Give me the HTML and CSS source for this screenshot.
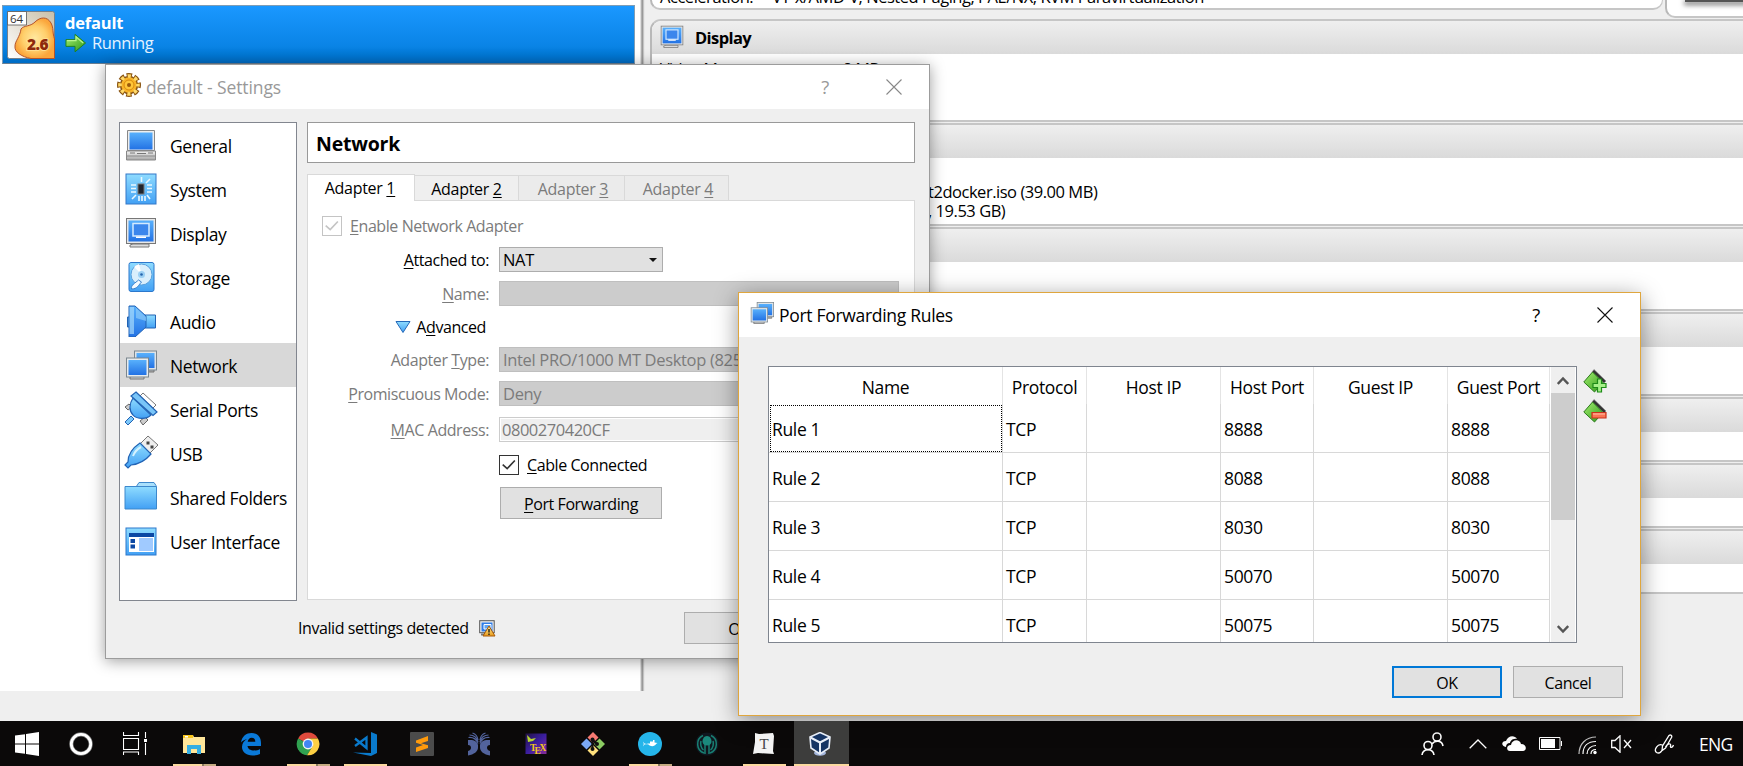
FILE: index.html
```html
<!DOCTYPE html>
<html lang="en">
<head>
<meta charset="utf-8">
<title>VirtualBox</title>
<link rel="stylesheet" href="styles.css">
</head>
<body>
<svg class="defs" width="0" height="0">
  <defs>
    <linearGradient id="blue" x1="0" y1="0" x2="0" y2="1"><stop offset="0" stop-color="#58b0fc"/><stop offset="1" stop-color="#2372e4"/></linearGradient>
    <linearGradient id="sky" x1="0" y1="0" x2="0" y2="1"><stop offset="0" stop-color="#8fdcff"/><stop offset="1" stop-color="#42a0f4"/></linearGradient>
    <linearGradient id="metal" x1="0" y1="0" x2="0" y2="1"><stop offset="0" stop-color="#f4f4f4"/><stop offset="1" stop-color="#a6a6a6"/></linearGradient>
    <linearGradient id="gold" x1="0" y1="0" x2="0" y2="1"><stop offset="0" stop-color="#fff0a0"/><stop offset="1" stop-color="#e89a18"/></linearGradient>
    <linearGradient id="green" x1="0" y1="0" x2="1" y2="1"><stop offset="0" stop-color="#a4ee70"/><stop offset="1" stop-color="#2c9818"/></linearGradient>
    <symbol id="i-display" viewBox="0 0 32 32">
      <path d="M8 27h16v3H5v-2z" fill="#ddd" stroke="#777"/>
      <rect x="1.5" y="1.5" width="29" height="25" fill="#e8e8e8" stroke="#777"/>
      <rect x="3.500" y="3.500" width="25" height="21" fill="url(#blue)"/>
      <rect x="8" y="6.500" width="16" height="12.500" fill="#3b86ec" stroke="#d4eaff" stroke-width="1.500"/>
      <path d="M11 19.500h10v1.500H11z" fill="#fff"/>
    </symbol>
    <symbol id="i-network" viewBox="0 0 32 32">
      <path d="M19 20h10v3H19z" fill="#aaa" stroke="#777"/>
      <rect x="9.500" y="2" width="22" height="19" fill="#dfe4e8" stroke="#7b868e"/>
      <rect x="11.500" y="4" width="18" height="15" fill="url(#blue)"/>
      <path d="M8 27h11v3H5v-2z" fill="#ccc" stroke="#777"/>
      <rect x="1.500" y="9" width="22" height="19" fill="#e8ecee" stroke="#7b868e"/>
      <rect x="3.500" y="11" width="18" height="15" fill="url(#blue)"/>
    </symbol>
  </defs>
</svg>

<div class="screen">
  <main class="manager">
    <section class="machines">
      <div class="machine">
        <svg class="machine-icon" viewBox="0 0 48 48">
          <defs><linearGradient id="tan" x1="0" y1="1" x2="1" y2="0"><stop offset="0" stop-color="#fff"/><stop offset="1" stop-color="#c9bfa8"/></linearGradient>
          <radialGradient id="blob"><stop offset="0" stop-color="#ffe9a0"/><stop offset=".6" stop-color="#ffcf6c"/><stop offset="1" stop-color="#fba63c"/></radialGradient></defs>
          <rect x=".5" y=".5" width="47" height="47" rx="2" fill="url(#tan)" stroke="#76808a"/>
          <path d="M47.500 47.500H24C15 46 7 41 8 35c0-5 5-9 6-17 3-4 9-2 14-7s12-6 16 1c3 6 1 8 3.500 16z" fill="url(#blob)" stroke="#b4532a"/>
          <path d="M.5.5h19v13.500H.5z" fill="#fff" stroke="#555" stroke-width=".8"/>
          <text x="3" y="11.500" class="t64">64</text>
          <text x="20" y="39" class="t26">2.6</text>
        </svg>
        <div class="machine-info">
          <div class="machine-name">default</div>
          <div class="machine-state">
            <svg width="22" height="20" viewBox="0 0 23 20"><path d="M1 6.500h9.500V1L21.500 10 10.500 19.200V13.500H1z" fill="url(#green)" stroke="#1e8018"/><path d="M2 7.500h9.500V3.500L19 10" fill="none" stroke="#b8f58e" stroke-width="1.300"/></svg>
            <span>Running</span>
          </div>
        </div>
      </div>
    </section>
    <div class="splitter"></div>
    <section class="details">
      <div class="top-row">
        <div class="panel system"><span class="key">Acceleration:</span><span>VT-x/AMD-V, Nested Paging, PAE/NX, KVM Paravirtualization</span></div>
        <div class="panel preview"><div class="preview-screen"></div></div>
      </div>
      <div class="panel p-tall"><header><svg width="24" height="24"><use href="#i-display"/></svg>Display</header>
        <div class="kv"><span class="key wide">Video Memory:</span><span>8 MB</span></div></div>
      <div class="panel p-tall"><header></header><div class="iso">t2docker.iso (39.00 MB)<br>, 19.53 GB)</div></div>
      <div class="panel p-mid"><header></header></div>
      <div class="panel p-mid"><header></header></div>
      <div class="panel p-low"><header></header></div>
      <div class="panel p-low"><header></header></div>
      <div class="panel p-low"><header></header></div>
    </section>
  </main>

  <section class="window settings">
    <div class="titlebar">
      <svg class="title-icon" viewBox="0 0 24 24"><g fill="none"><circle cx="12" cy="12" r="9.500" stroke="#8a5410" stroke-width="5" stroke-dasharray="5.200 2.261" stroke-dashoffset="2.600"/><circle cx="12" cy="12" r="8.500" fill="#f9b428" stroke="#8a5410" stroke-width="1.500"/><circle cx="12" cy="12" r="9" stroke="#ffd968" stroke-width="3.600" stroke-dasharray="3.200 3.869" stroke-dashoffset="1.600"/></g><circle cx="12" cy="12" r="5" fill="#ffc63a" stroke="#d8890e"/><circle cx="12" cy="12" r="2" fill="#9a5a0c"/></svg>
      <span>default - Settings</span>
      <span class="help">?</span>
      <svg class="close" viewBox="0 0 16 16"><path d="M.5.5l15 15M15.500.5l-15 15"/></svg>
    </div>
    <div class="settings-body">
      <nav class="categories">
        <div class="cat"><svg viewBox="0 0 32 32"><path d="M2.500 1.500h27v20h-27z" fill="#eee" stroke="#888"/><path d="M4.500 3.500h23v17h-23z" fill="url(#blue)"/><path d="M1.500 22h29v9h-29z" fill="url(#metal)" stroke="#888"/><path d="M2 27h28" stroke="#888"/><path d="M5 24h5M12 24.500h9M23 24h5" stroke="#777"/></svg>General</div>
        <div class="cat"><svg viewBox="0 0 32 32"><rect x="1" y="1" width="30" height="30" fill="url(#sky)" stroke="#3478c8"/><rect x="13" y="11" width="6" height="10" fill="#20242c" stroke="#777"/><path d="M16.500 4v5M25 6l-4 4M6 12h5M6 15.500h5M6 19h5M22 12h5M22 15.500h5M22 19h5M7 26l4-4M14 23v5M17 23v5M20 23v5M22 22l3 4" stroke="#e8f8ff" stroke-width="1.600"/></svg>System</div>
        <div class="cat"><svg><use href="#i-display"/></svg>Display</div>
        <div class="cat"><svg viewBox="0 0 32 32"><rect x="4" y="1.500" width="25" height="29" rx="2" fill="url(#sky)" stroke="#2c78cc"/><circle cx="16.500" cy="13.500" r="10.500" fill="#d9effc" stroke="#5aa0dc"/><path d="M16.500 13L9 6a11 11 0 0 1 5-3z" fill="#fff"/><circle cx="16.500" cy="13.500" r="3.500" fill="#9bd0f4"/><circle cx="16.500" cy="13.500" r="1.300" fill="#2464ac"/><path d="M6.500 28c-1-4 4-6 7-9l3 2c-3 3-4 7-10 7z" fill="#f4fbff" stroke="#3b82cc"/></svg>Storage</div>
        <div class="cat"><svg viewBox="0 0 32 32"><path d="M2.500 12h3v10h-3z" fill="#5aa8ee" stroke="#2263b4"/><path d="M20 10h10.500v13H20z" fill="url(#sky)" stroke="#2263b4"/><path d="M4 1h6l11 10v11L10 32H4z" fill="url(#blue)" stroke="#2263b4"/><path d="M4.500 2H9v27H4.500z" fill="#a5d8fb" opacity=".7"/><path d="M11 3l10 9v4l-10-3z" fill="#8ccafa" opacity=".7"/></svg>Audio</div>
        <div class="cat active"><svg><use href="#i-network"/></svg>Network</div>
        <div class="cat"><svg class="big" viewBox="0 0 34 34"><path d="M19 2l13 12-3 3L16 5z" fill="#fff" stroke="#777"/><path d="M1 16l4-3 3 3-4 3zM16 30l5-4 3 3-5 5z" fill="#ccc" stroke="#666"/><path d="M1 31l6-6 3 3-6 6z" fill="#7cc8fa" stroke="#2263b4"/><path d="M9 7l18 17c-5 5-15 4-18 0-4-4-4-11 0-17z" fill="url(#sky)" stroke="#2263b4" stroke-width="1.200"/><path d="M12 1L33 21l-4 3.500L7 5z" fill="#79c5f8" stroke="#2263b4" stroke-width="1.200"/></svg>Serial Ports</div>
        <div class="cat"><svg class="big" viewBox="0 0 34 34"><path d="M24 1l10 9-8 8-10-9z" fill="#eee" stroke="#777"/><path d="M22.500 6.500h3v3h-3zM26.500 10.500h3v3h-3z" fill="#444"/><path d="M16 8l11 11c-5 6-11 10-20 11l-3 3-3-3 3-3C4 18 10 12 16 8z" fill="url(#sky)" stroke="#2263b4" stroke-width="1.200"/><path d="M9 21c2-5 4-7 8-9" stroke="#d5f2ff" stroke-width="2" fill="none"/></svg>USB</div>
        <div class="cat"><svg class="big" viewBox="0 0 34 34"><path d="M12 8l3-4.500h15l2 3V10H12z" fill="#a9e0fc" stroke="#3d88cc"/><path d="M1 7.500h31.500V30H1z" fill="url(#sky)" stroke="#3d88cc"/></svg>Shared Folders</div>
        <div class="cat"><svg viewBox="0 0 32 32"><rect x="1" y="3" width="30" height="27" fill="url(#sky)" stroke="#2c78cc"/><path d="M4 8h25v4H4z" fill="#0b48a4"/><path d="M4 12h25v15H4z" fill="#fff"/><path d="M14 13h14v13H14z" fill="#a0caff"/><path d="M5.500 14h4.500v4H5.500zM5.500 19.500h4.500v4H5.500z" fill="#0b48a4"/></svg>User Interface</div>
      </nav>
      <div class="page">
        <h1>Network</h1>
        <div class="tabs">
          <div class="tab on">Adapter <u>1</u></div>
          <div class="tab t2">Adapter <u>2</u></div>
          <div class="tab t3 off">Adapter <u>3</u></div>
          <div class="tab t4 off">Adapter <u>4</u></div>
        </div>
        <div class="pane">
          <div class="row enable off"><span class="check"><svg viewBox="0 0 20 20"><path d="M3 9.500l5 4.500L16.500 5"/></svg></span><span><u>E</u>nable Network Adapter</span></div>
          <div class="row attached"><label><u>A</u>ttached to:</label><div class="combo live">NAT<i></i></div></div>
          <div class="row name off"><label><u>N</u>ame:</label><div class="combo"><i></i></div></div>
          <div class="row advanced"><label><svg width="16" height="14" viewBox="0 0 16 14"><path d="M1 1.500h14L8 12.500z" fill="url(#sky)" stroke="#2468b8"/></svg>A<u>d</u>vanced</label></div>
          <div class="row type off"><label>Adapter <u>T</u>ype:</label><div class="combo">Intel PRO/1000 MT Desktop (82540EM)<i></i></div></div>
          <div class="row mode off"><label><u>P</u>romiscuous Mode:</label><div class="combo">Deny<i></i></div></div>
          <div class="row mac off"><label><u>M</u>AC Address:</label><div class="field">0800270420CF</div></div>
          <div class="row cable"><label></label><span class="check"><svg viewBox="0 0 20 20"><path d="M3 9.500l5 4.500L16.500 5"/></svg></span><span class="cable-text"><u>C</u>able Connected</span></div>
          <div class="row fwd"><label></label><button class="btn"><span><u>P</u>ort Forwarding</span></button></div>
        </div>
      </div>
    </div>
    <footer class="settings-foot">
      <span class="msg">Invalid settings detected</span>
      <svg width="17" height="17" viewBox="0 0 17 17"><rect x=".7" y=".7" width="14.500" height="12" fill="#eee" stroke="#555"/><path d="M2.500 2.500h11v9h-11z" fill="#2f7de8"/><path d="M5 4.500h7v4.500H5z" fill="#5fa4f4" stroke="#fff"/><path d="M2 13.500h5v2H2z" fill="#777"/><path d="M10 6l6 10H4z" fill="url(#gold)" stroke="#a85a08"/><path d="M10 9v3.500M10 13.500v1.500" stroke="#111" stroke-width="1.300"/></svg>
      <button class="btn">OK</button>
    </footer>
  </section>

  <section class="window rules">
    <div class="titlebar">
      <svg class="title-icon" viewBox="0 0 32 32"><use href="#i-network"/></svg>
      <span>Port Forwarding Rules</span>
      <span class="help">?</span>
      <svg class="close" viewBox="0 0 16 16"><path d="M.5.5l15 15M15.500.5l-15 15"/></svg>
    </div>
    <div class="rules-body">
      <div class="table-box">
        <div class="grid">
          <div class="th">Name</div><div class="th">Protocol</div><div class="th">Host IP</div><div class="th">Host Port</div><div class="th">Guest IP</div><div class="th">Guest Port</div>
          <div class="td focus">Rule 1</div><div class="td">TCP</div><div class="td"></div><div class="td">8888</div><div class="td"></div><div class="td">8888</div>
          <div class="td">Rule 2</div><div class="td">TCP</div><div class="td"></div><div class="td">8088</div><div class="td"></div><div class="td">8088</div>
          <div class="td">Rule 3</div><div class="td">TCP</div><div class="td"></div><div class="td">8030</div><div class="td"></div><div class="td">8030</div>
          <div class="td">Rule 4</div><div class="td">TCP</div><div class="td"></div><div class="td">50070</div><div class="td"></div><div class="td">50070</div>
          <div class="td">Rule 5</div><div class="td">TCP</div><div class="td"></div><div class="td">50075</div><div class="td"></div><div class="td">50075</div>
        </div>
        <div class="scroll">
          <svg width="12" height="9" viewBox="0 0 12 9"><path d="M.8 8L6 2.500 11.200 8"/></svg>
          <div class="thumb"></div>
          <svg class="down" width="12" height="9" viewBox="0 0 12 9"><path d="M.8 1L6 6.500 11.200 1"/></svg>
        </div>
      </div>
      <div class="tools">
        <svg viewBox="0 0 24 24"><path d="M11 .5L23 12l-2 2L9 3z" fill="#333" stroke="#888" stroke-width=".6"/><path d="M9.500 3L20 13.500 11.500 23 .8 13z" fill="url(#green)" stroke="#2b7a1c"/><path d="M14.500 10h4v4.500H23v4h-4.500V23h-4v-4.500H10v-4h4.500z" fill="#a6f088" stroke="#1d8a18" stroke-width="1.200"/></svg>
        <svg viewBox="0 0 24 24"><path d="M11 .5L23 12l-2 2L9 3z" fill="#333" stroke="#888" stroke-width=".6"/><path d="M9.500 3L20 13.500 11.500 23 .8 13z" fill="url(#green)" stroke="#2b7a1c"/><path d="M9 13.500h14v5.500H9z" fill="#fb7454" stroke="#c8321c" stroke-width="1.200"/><path d="M10 15h12" stroke="#ffc0a8"/></svg>
      </div>
    </div>
    <footer class="rules-foot"><button class="btn default">OK</button><button class="btn">Cancel</button></footer>
  </section>

  <footer class="taskbar">
    <div class="sys"><svg viewBox="0 0 24 24"><path d="M0 3.500l10-1.300v9.300H0zM11 2l13-2v11.500H11zM0 12.500h10v9.300L0 20.500zM11 12.500h13V24l-13-2z" fill="#fff"/></svg></div>
    <div class="sys"><svg viewBox="0 0 24 24"><circle cx="12" cy="12" r="9.700" fill="none" stroke="#777" stroke-width="4.200"/><circle cx="12" cy="12" r="9.700" fill="none" stroke="#fff" stroke-width="2.800"/></svg></div>
    <div class="sys"><svg viewBox="0 0 24 24"><path d="M.5 0v3.500h15V0M.5 6.500h15v11H.5zM.5 23v-3h15v3M22.500 0v6M22.500 11v12" fill="none" stroke="#fff" stroke-width="1.100"/><path d="M21 7h3v3h-3z" fill="#fff"/></svg></div>
    <div class="apps">
      <div class="app multi"><svg viewBox="0 0 24 24"><path d="M1 5l1-2h9l1 2h11v16H1z" fill="#ffe69a"/><path d="M1 3h10v3H1z" fill="#f8c61c"/><path d="M3 4h3v1.500H3z" fill="#fff"/><path d="M5 22v-9h14v9h-4v-5H9v5z" fill="#34aee4"/></svg></div>
      <div class="app"><svg viewBox="0 0 24 24"><path d="M2 10.500C3 4 7.500 1 12.500 1 19 1 22 5.500 22 11v3H8.500c.3 3 3 4.500 6.500 4.500 2.500 0 4.500-.7 6-1.600v5c-2 1-4.500 1.600-7.500 1.600C7 23.500 3 19.800 3 15c0-3.500 2-6.300 5-8-3 .8-4.800 2-6 3.500zM8.700 9.700h7.600c0-2.500-1.300-4-3.600-4s-3.700 1.700-4 4z" fill="#0a79d8"/></svg></div>
      <div class="app multi"><svg viewBox="0 0 24 24"><path d="M12 12L2.100 6.500A11.200 11.200 0 0 1 21.900 6.500H12z" fill="#df4a3c"/><path d="M2.100 6.500A11.200 11.200 0 0 0 11 23.200l5.500-8.500L12 12z" fill="#30a150"/><path d="M21.900 6.500A11.200 11.200 0 0 1 11 23.200L16.500 14.500 12 6.500z" fill="#fdd043"/><circle cx="12" cy="12" r="5.400" fill="#f4f4f4"/><circle cx="12" cy="12" r="4" fill="#4286f3"/></svg></div>
      <div class="app run"><svg viewBox="0 0 24 24"><path d="M18 0l6 2.500V21l-6 3L0 20.500l18 .5z" fill="#0a7acc"/><path d="M2 6.500L13.500 16V5.500L2 14" fill="none" stroke="#0a7acc" stroke-width="2.300"/></svg></div>
      <div class="app"><svg viewBox="0 0 24 24"><rect width="24" height="24" rx="1" fill="#4b4b4b"/><path d="M6 8.500L18 4v5l-7 2.300 7 2V16L6 20v-4.500l7-2.500-7-2.300z" fill="#ff9a0c"/></svg></div>
      <div class="app"><svg viewBox="0 0 24 24"><path d="M11 13C10 9 7 7.500 1 8v5c4 0 4 5 0 6v4.500c6-1 10-4 10-8zM13 13c1-4 4-5.500 10-5v5c-4 0-4 5 0 6v4.500c-6-1-10-4-10-8z" fill="#52639c"/><path d="M1.500 5.500c5-.5 8 2 9.500 6M2.500 3c5 0 7.500 3 8.500 7M5.500 1c3 1 5 3 5.500 7M22.500 5.500c-5-.5-8 2-9.500 6M21.500 3c-5 0-7.500 3-8.500 7M18.500 1c-3 1-5 3-5.500 7" stroke="#52639c" fill="none" stroke-width="1.200"/></svg></div>
      <div class="app"><svg viewBox="0 0 24 24"><defs><linearGradient id="tex" x1="0" y1="0" x2="1" y2="1"><stop offset="0" stop-color="#221244"/><stop offset=".5" stop-color="#3a1ea0"/><stop offset="1" stop-color="#8a2c98"/></linearGradient></defs><rect x="1.500" y="1.500" width="21" height="20.500" fill="url(#tex)"/><path d="M3 3l4 4 5-1-3 3-5 1z" fill="#b8d830"/><text x="6" y="19" class="tex">T</text><text x="10.500" y="21.500" class="tex">E</text><text x="15.500" y="19" class="tex">X</text></svg></div>
      <div class="app"><svg viewBox="0 0 24 24"><path d="M12 0l5.500 5.500L12 11 6.500 5.500z" fill="#f77a72"/><path d="M0 12l5.500-5.500L11 12l-5.500 5.500z" fill="#7ba8f4"/><path d="M24 12l-5.500-5.500L13 12l5.500 5.500z" fill="#8ccc62"/><path d="M12 24l-5.500-5.500L12 13l5.500 5.500z" fill="#ffe07c"/><path d="M11.500 7v10M11 7l5 5" stroke="#111" stroke-width="2"/><circle cx="11.500" cy="17" r="2" fill="#111"/><circle cx="16" cy="12" r="2" fill="#111"/><circle cx="11.500" cy="7.500" r="2" fill="#111"/></svg></div>
      <div class="app multi"><svg viewBox="0 0 24 24"><circle cx="12" cy="12" r="12" fill="#25b5ea"/><path d="M10 11.500h2v-2h3V8h1.500v2.500l3 .5-1.500 1c-1 2.500-5.500 3-7.500.5L8.500 12zM5 9.500l1.500 2L9 12l-2.500.5-1.500 2 .8-2.500z" fill="#fff"/></svg></div>
      <div class="app"><svg viewBox="0 0 24 24"><circle cx="12" cy="12" r="11.500" fill="#10171f"/><path d="M8 3.500A9.500 9.500 0 0 0 9 21M16 3.500A9.500 9.500 0 0 1 15 21M6 9c-1 3 0 7 2.500 9M18 9c1 3 0 7-2.500 9M10 12v10M14 12v10" fill="none" stroke="#187f72" stroke-width="1.500"/><path d="M12 4c3 0 4.500 3 4.500 5.500 0 2-1.500 4-4.500 4s-4.500-2-4.500-4C7.500 7 9 4 12 4z" fill="#1b897c"/></svg></div>
      <div class="app run"><svg viewBox="0 0 24 24"><path d="M3 1l4 1 14-1 1 3-1 15 1 3-16-1-5 1 2-12z" fill="#f3f3f3"/><text x="12" y="17" text-anchor="middle" class="typ">T</text></svg></div>
      <div class="app run current"><svg viewBox="0 0 24 24"><ellipse cx="12" cy="21" rx="6" ry="2.800" fill="#a4b6dc"/><path d="M12 .5l10 4.500-1 11-9 6-9-6L2 5z" fill="#153464" stroke="#e8eef8" stroke-width="1.600"/><path d="M2.500 5.500L12 10.500l9.500-5M12 10.500V21" fill="none" stroke="#e8eef8" stroke-width="2"/></svg></div>
    </div>
    <div class="tray">
      <svg class="people" viewBox="0 0 24 24"><g fill="none" stroke="#fff" stroke-width="1.600"><circle cx="16" cy="5" r="4"/><path d="M11 12c3-4 10-4 11 2"/><circle cx="7" cy="13.500" r="4"/><path d="M1 23c1-7 11-7 12 0"/></g></svg>
      <svg class="chev" viewBox="0 0 18 10"><path d="M.7 9.300L9 1l8.300 8.300" fill="none" stroke="#fff" stroke-width="1.300"/></svg>
      <svg class="cloud" viewBox="0 0 24 16"><path d="M4 11C-1 10-1 5 4 5c2-6 9-6 11-2-5-1-7 3-7 4-3 0-4 2-4 4z" fill="#fff"/><path d="M8 15c-4 0-4-6 1-6 1-6 9-6 10-1 6 0 6 7 2 7z" fill="#fff"/></svg>
      <svg class="battery" viewBox="0 0 23 13"><path d="M.5.500h20.500v12H.5z" fill="none" stroke="#fff"/><path d="M2 2h14v9H2zM22 4h1v5h-1z" fill="#fff"/></svg>
      <svg class="wifi" viewBox="0 0 19 19"><g fill="none" stroke="#fff" stroke-width="1.200"><path d="M1 18C1 8 8 1 18 1" opacity=".75"/><path d="M5 18C5 10 10 5.500 18 5.500M9 18c0-5 4-8.500 9-8.500M13 18c0-3 2-4.500 5-4.500"/></g><circle cx="17" cy="16.500" r="1.700" fill="#fff"/></svg>
      <svg class="vol" viewBox="0 0 21 18"><path d="M.7 5.500H4L9 .8v16.400L4 12.500H.7zM13 5l7 8M20 5l-7 8" fill="none" stroke="#fff" stroke-width="1.300"/></svg>
      <svg class="pen" viewBox="0 0 20 20"><path d="M7.500 16.500l.5-4.500L14.500 1.500c1.500-1.200 3.500 0 2.500 2L11 14zM8 11c-5-2-9 5-6 7.500 3 1.500 5-1 6-3M11 13c2-4 6-4 5-1-.5 2 2 2 3-1" fill="none" stroke="#fff" stroke-width="1.300"/></svg>
      <span class="lang">ENG</span>
    </div>
  </footer>
</div>
</body>
</html>
```

FILE: styles.css
```css
* { box-sizing: border-box; }
body { margin: 0; font-family: "Open Sans", "Noto Sans", sans-serif; font-size: 16px; color: #000; letter-spacing: -0.42px; }
u { text-decoration-thickness: 1px; text-underline-offset: 2px; }
.defs { position: absolute; }
svg { flex: none; display: block; }
.screen { position: relative; width: 1743px; height: 766px; overflow: hidden; background: #efefef; display: flex; flex-direction: column; }

.manager { height: 721px; display: flex; flex: none; padding-bottom: 30px; overflow: hidden; }
.machines { width: 640px; background: #fff; padding: 5px 0 0 2px; flex: none; }
.machine { width: 633px; height: 59px; border: 1px solid #7f9db5; border-bottom-color: #6a7f92; background: linear-gradient(#1a98ff, #0a84e6 70%, #0076d2 88%, #006cc4); display: flex; padding: 5px 0 0 4px; }
.machine-icon { width: 48px; height: 48px; }
.t64 { font: 500 11.5px "Open Sans", sans-serif; fill: #333; letter-spacing: 0; }
.t26 { font: 800 15.5px "Open Sans", sans-serif; fill: #8e2a0c; stroke: #ffdf90; stroke-width: 2px; paint-order: stroke; letter-spacing: -0.5px; }
.machine-info { padding: 2px 0 0 10px; color: #fff; }
.machine-name { font-weight: 700; font-size: 16.5px; line-height: 20px; letter-spacing: -0.2px; }
.machine-state { display: flex; line-height: 19px; height: 20px; gap: 5px; color: #e4f2ff; font-size: 16.5px; letter-spacing: -0.35px; }
.splitter { width: 5px; background: linear-gradient(90deg, #e0e0e0 0 1px, #b0b0b0 1px 2px, #999 2px 3px, #c4c4c4 3px 4px, #e8e8e8 4px); flex: none; }
.details { width: 1110px; flex: none; padding-left: 5px; display: flex; flex-direction: column; gap: 1px; }
.top-row { display: flex; height: 18px; gap: 2px; align-items: flex-start; flex: none; }
.panel { background: #fff; border: 1px solid #b8b8b8; border-width: 2px 1px 2px 2px; border-color: #c6c6c6 #c6c6c6 #c6c6c6 #b8b8b8; flex: none; }
.panel header { height: 33px; background: linear-gradient(#efefef, #dadada); display: flex; align-items: center; gap: 11px; padding-left: 8px; font-weight: 700; font-size: 16.5px; letter-spacing: -0.6px; border-radius: 9px 0 0 0; }
.panel header svg { margin-bottom: 2px; }
.system { width: 1013px; height: 10px; border-top: 0; border-radius: 0 0 10px 10px; display: flex; align-items: flex-end; padding: 0 0 1px 8px; line-height: 20px; font-size: 16.5px; letter-spacing: -0.47px; }
.key { width: 112px; flex: none; }
.wide { width: 183px; }
.preview { width: 110px; height: 18px; border-top: 0; border-radius: 0 0 0 10px; padding-left: 18px; }
.preview-screen { height: 2px; background: #555; box-shadow: 0 2px 5px 1px #777; }
.p-tall { height: 103px; border-radius: 11px 0 0 0; }
.p-mid { height: 84px; border-radius: 11px 0 0 0; }
.p-low { height: 65px; border-radius: 11px 0 0 0; }
.kv { display: flex; padding: 5px 0 0 8px; line-height: 20px; }
.iso { padding: 24px 0 0 276px; line-height: 19px; font-size: 16.5px; letter-spacing: -0.47px; }

.window { position: absolute; background: #efefef; }
.settings { left: 105px; top: 64px; width: 825px; height: 595px; border: 1px solid #9c9c9c; box-shadow: 0 2px 14px rgba(0,0,0,.38); }
.rules { left: 738px; top: 292px; width: 903px; height: 424px; border: 1px solid #dfa63e; box-shadow: 0 5px 22px rgba(0,0,0,.42); }
.titlebar { height: 44px; background: #fff; display: flex; align-items: center; font-size: 17.5px; letter-spacing: -0.3px; padding: 0 27px 0 11px; }
.title-icon { width: 24px; height: 24px; margin-right: 5px; margin-bottom: 4px; }
.settings .titlebar > span:first-of-type { letter-spacing: -0.12px; }
.titlebar .help { margin-left: auto; font-size: 18.5px; margin-right: 57px; padding-bottom: 2px; }
.close { width: 16px; height: 16px; fill: none; stroke: #111; stroke-width: 1.1; margin-bottom: 1px; }
.settings .titlebar { color: #999; }
.settings .close { stroke: #888; }

.settings-body { display: flex; padding: 13px 14px 0 13px; gap: 10px; height: 492px; }
.categories { width: 178px; height: 479px; background: #fff; border: 1px solid #82868f; flex: none; font-size: 17.5px; letter-spacing: -0.38px; }
.cat { height: 44px; display: flex; align-items: center; padding: 2px 0 0 50px; white-space: nowrap; }
.cat svg { width: 32px; height: 32px; margin: -2px 13px 0 -45px; }
.cat .big { width: 34px; height: 34px; margin: -4px 12px 0 -46px; }
.cat.active { background: #d8d8d8; }
.page { width: 608px; }
h1 { margin: 0 0 11px; height: 41px; border: 1px solid #999; background: #fff; font-size: 19.5px; line-height: 41px; padding-left: 8px; letter-spacing: -0.2px; }
.tabs { height: 26px; display: flex; align-items: flex-end; }
.tab { height: 25px; border: 1px solid #d9d9d9; border-bottom: 0; border-left: 0; line-height: 27px; text-align: center; background: #efefef; letter-spacing: -0.3px; }
.tab.on { height: 27px; width: 108px; border-left: 1px solid #d9d9d9; background: #fff; position: relative; z-index: 1; margin-bottom: -1px; line-height: 26px; padding-right: 2px; }
.tab.t2 { width: 104px; }
.tab.t3, .tab.t4 { width: 106px; background: #ebebeb; padding-left: 3px; }
.tab.t4 { width: 104px; }
.off { color: #7b7b7b; }
.pane { width: 608px; height: 400px; background: #fff; border: 1px solid #d9d9d9; }
.row { display: flex; height: 25px; align-items: center; white-space: nowrap; }
.row label { width: 181px; margin-right: 10px; flex: none; display: flex; justify-content: flex-end; align-items: center; white-space: pre; }
.enable { height: 20px; margin: 15px 0 0 14px; gap: 8px; }
.attached { margin-top: 11px; }
.name { margin-top: 9px; }
.advanced { height: 25px; margin-top: 8px; }
.advanced label { padding-right: 3px; }
.advanced svg { margin-right: 5px; }
.type { margin-top: 8px; }
.mode { margin-top: 9px; }
.mac { margin-top: 11px; }
.cable { height: 20px; margin-top: 13px; }
.cable-text { margin-left: 8px; }
.fwd { height: 32px; margin-top: 12px; }
.fwd .btn { width: 162px; margin-left: 1px; }
.check { width: 20px; height: 20px; border: 1px solid #333; flex: none; }
.check path { fill: none; stroke: #333; stroke-width: 1.8; }
.off .check { border-color: #c4c4c4; }
.off .check path { stroke: #c4c4c4; }
.combo { width: 400px; height: 25px; border: 1px solid #bfbfbf; background: #ccc; line-height: 24px; padding: 0 5px 0 3px; display: flex; align-items: center; font-size: 16.5px; letter-spacing: -0.33px; }
.combo.live { width: 164px; background: #e1e1e1; border-color: #adadad; }
.combo i { margin-left: auto; border: 4px solid transparent; border-top: 4px solid #111; border-bottom: 0; }
.off .combo i { border-top-color: #888; }
.field { width: 400px; height: 25px; border: 1px solid #ccc; box-shadow: inset 0 0 0 1px #fff; background: #efefef; line-height: 23px; padding-left: 2px; font-size: 16.5px; letter-spacing: -0.48px; }
.btn { height: 32px; border: 1px solid #adadad; background: #e1e1e1; padding: 1px 0 0; font: inherit; letter-spacing: inherit; color: #000; flex: none; }
.btn.default { border: 2px solid #0078d7; }
.settings-foot { display: flex; align-items: center; height: 32px; margin-top: 11px; padding-left: 192px; }
.msg { width: 171px; margin-right: 10px; white-space: nowrap; }
.settings-foot .btn { width: 110px; margin-left: 188px; }

.rules-body { display: flex; padding: 29px 0 0 29px; gap: 6px; }
.table-box { width: 809px; height: 277px; border: 1px solid #7f858f; background: #fff; display: flex; overflow: hidden; }
.grid { display: grid; grid-template-columns: 234px 84px 134px 93px 134px 102px; grid-template-rows: 37px; grid-auto-rows: 49px; width: 781px; font-size: 17.5px; letter-spacing: -0.35px; flex: none; margin-right: 1px; }
.th { border-right: 1px solid #e4e4e4; display: flex; align-items: center; justify-content: center; padding-top: 2px; white-space: nowrap; }
.td { border-right: 1px solid #d8d8d8; border-bottom: 1px solid #d8d8d8; display: flex; align-items: center; padding: 1px 0 0 3px; }
.focus { outline: 1px dotted #000; outline-offset: -2px; }
.scroll { width: 24px; background: #efefef; display: flex; flex-direction: column; align-items: center; flex: none; padding: 9px 0 8px; }
.scroll path { fill: none; stroke: #555; stroke-width: 2.4; }
.thumb { width: 24px; height: 127px; background: #cdcdcd; margin-top: 8px; }
.scroll .down { margin-top: auto; }
.tools { display: flex; flex-direction: column; gap: 6px; padding-top: 3px; }
.tools svg { width: 24px; height: 24px; }
.rules-foot { display: flex; justify-content: flex-end; gap: 11px; padding: 23px 17px 0 0; }
.rules-foot .btn { width: 110px; }

.taskbar { height: 45px; background: #0b0909; display: flex; flex: none; color: #fff; }
.sys { width: 54px; display: flex; justify-content: center; padding-top: 11px; }
.sys svg, .app svg { width: 24px; height: 24px; }
.apps { display: flex; margin-left: 4px; }
.app { width: 57px; padding: 11px 2px 0 0; display: flex; justify-content: center; position: relative; }
.run::after, .multi::after { content: ""; position: absolute; left: 7px; bottom: 0; width: 43px; height: 2px; background: #fbd9a0; }
.multi::after { background: linear-gradient(90deg, #fbd9a0 29px, #8a7a60 29px 31px, #c4ab82 31px); }
.current { width: 55px; margin-left: 1px; background: #3d3d3c; padding-right: 3px; }
.current::after { left: 0; width: 55px; }
.tex { font: 700 9.5px "Liberation Serif", serif; fill: #f4c818; letter-spacing: 0; }
.typ { font: 15px "Liberation Serif", serif; fill: #444; letter-spacing: 0; }
.tray { margin-left: auto; display: flex; align-items: center; padding-right: 11px; }
.people { width: 24px; height: 24px; margin-right: 24px; }
.chev { width: 18px; height: 10px; margin-right: 15px; }
.cloud { width: 24px; height: 16px; margin-right: 13px; }
.battery { width: 23px; height: 13px; margin-right: 16px; }
.wifi { width: 19px; height: 19px; margin: 3px 14px 0 0; }
.vol { width: 21px; height: 18px; margin-right: 22px; }
.pen { width: 21px; height: 20px; margin-right: 24px; }
.lang { font-size: 17.5px; width: 33px; letter-spacing: -0.7px; padding-top: 1px; }
```
